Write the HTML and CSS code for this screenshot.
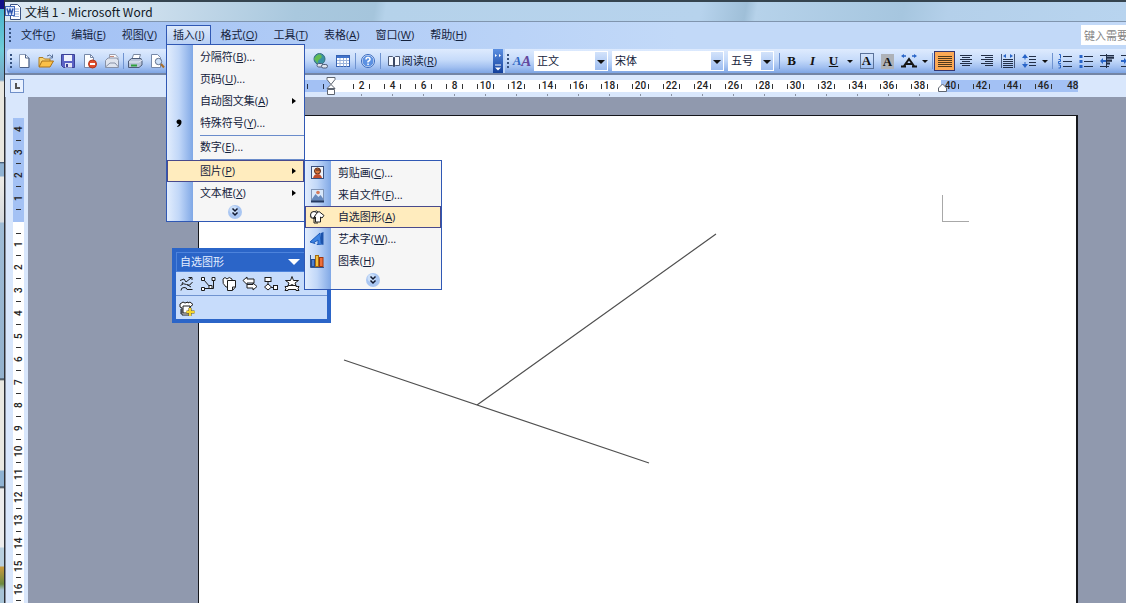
FILE: index.html
```html
<!DOCTYPE html>
<html lang="zh-CN">
<head>
<meta charset="utf-8">
<title>文档 1 - Microsoft Word</title>
<link rel="stylesheet" href="styles.css">
</head>
<body>
<div class="behind"></div>
<div class="app">
  <header class="titlebar">
    <svg class="icon" viewBox="0 0 16 16"><path d="M5.500 .5h7l3 3v12h-10z" fill="#fff" stroke="#3c5484"/><path d="M8 5h6M8 7.500h6M8 10h6M8 12.500h6" stroke="#9db4dc"/><rect x=".5" y="2.500" width="9" height="9" fill="#dbe6fa" stroke="#3f66b8"/><path d="M2 4.500l1.500 5L5 5.500l1.500 4L8 4.500" fill="none" stroke="#2d54ab" stroke-width="1.500"/></svg>
    <h1>文档 1 - Microsoft Word</h1>
  </header>

  <nav class="menubar">
    <span class="grip"></span>
    <ul class="menus">
      <li><button>文件(<u>F</u>)</button></li>
      <li><button>编辑(<u>E</u>)</button></li>
      <li><button>视图(<u>V</u>)</button></li>
      <li class="open"><button>插入(<u>I</u>)</button>
        <div class="menu menu-insert">
          <button class="row"><span class="rail"></span><span class="label">分隔符(<u>B</u>)...</span></button>
          <button class="row"><span class="rail"></span><span class="label">页码(<u>U</u>)...</span></button>
          <button class="row more"><span class="rail"></span><span class="label">自动图文集(<u>A</u>)</span></button>
          <button class="row"><span class="rail"><svg class="icon" viewBox="0 0 16 16"><path d="M5.500 7a2.500 2.500 0 1 1 5 0q0 3.500-4 5l-.4-.8q1.600-.8 1.900-1.900Q5.500 9 5.500 7z"/></svg></span><span class="label">特殊符号(<u>Y</u>)...</span></button>
          <hr>
          <button class="row"><span class="rail"></span><span class="label">数字(<u>E</u>)...</span></button>
          <hr>
          <div class="parent">
            <button class="row more hot"><span class="rail"></span><span class="label">图片(<u>P</u>)</span></button>
            <div class="menu submenu">
              <button class="row"><span class="rail"><svg class="icon" viewBox="0 0 16 16"><rect x="2.500" y="1.500" width="12" height="12" fill="#eef2f8" stroke="#38507f"/><circle cx="8.500" cy="6" r="3" fill="#d9763c" stroke="#5a2c18"/><path d="M4 13q1-4 4.500-4t4.500 4z" fill="#c04c2b"/><path d="M7 5h4" stroke="#402020"/></svg></span><span class="label">剪贴画(<u>C</u>)...</span></button>
              <button class="row"><span class="rail"><svg class="icon" viewBox="0 0 16 16"><rect x="2.500" y="2.500" width="12" height="11" fill="#d9e8fb" stroke="#8094b5"/><path d="M3 12l3.500-5 3 3 2-2 3 4v1.500H3z" fill="#6789bd"/><path d="M2 14.500h13" stroke="#243a63" stroke-width="2"/><circle cx="9" cy="5.500" r="1.800" fill="#d47a5c"/></svg></span><span class="label">来自文件(<u>F</u>)...</span></button>
              <button class="row hot"><span class="rail"><svg class="icon" viewBox="0 0 16 16"><path d="M3 9.500Q.5 8 2 5.500 2 2.500 5 3q3-2.500 4.500.5" fill="#fff" stroke="#222"/><circle cx="5" cy="6" r="3.500" fill="#fff" stroke="#222"/><path d="M7.500 4.500l2.500-2 5 4-2 2.500-1.500-1V13h-5V8l-2 1z" fill="#fff" stroke="#222"/><path d="M5 9v5h4" fill="none" stroke="#222"/></svg></span><span class="label">自选图形(<u>A</u>)</span></button>
              <button class="row"><span class="rail"><svg class="icon" viewBox="0 0 16 16"><path d="M1 11L11 2l1 10 2 1-6 .5 1-1V9L5 11.500l1 1z" fill="#3d83e2" stroke="#1f5bb8"/><path d="M12 2l2.500-1v13L12 12z" fill="#1c52aa"/></svg></span><span class="label">艺术字(<u>W</u>)...</span></button>
              <button class="row"><span class="rail"><svg class="icon" viewBox="0 0 16 16"><path d="M1.500 2v12.500H15" fill="none" stroke="#34568e"/><rect x="2.500" y="6.500" width="3" height="7" fill="#4e80cf" stroke="#244c93"/><rect x="6.500" y="2.500" width="3" height="11" fill="#f4c13e" stroke="#a36a11"/><rect x="10.500" y="4.500" width="3.500" height="9" fill="#ee703a" stroke="#a0350f"/></svg></span><span class="label">图表(<u>H</u>)</span></button>
              <button class="expand" aria-label="展开"><span class="rail"></span><svg class="orb" viewBox="0 0 14 14"><circle cx="7" cy="7" r="7" fill="#a9c6f2"/><circle cx="5.500" cy="5" r="4" fill="#cbdff9"/><path d="M4.500 3.500L7 6l2.500-2.500M4.500 7.500L7 10l2.500-2.500" fill="none" stroke="#101830" stroke-width="1.500"/></svg></button>
            </div>
          </div>
          <button class="row more"><span class="rail"></span><span class="label">文本框(<u>X</u>)</span></button>
          <button class="expand" aria-label="展开"><span class="rail"></span><svg class="orb" viewBox="0 0 14 14"><circle cx="7" cy="7" r="7" fill="#a9c6f2"/><circle cx="5.500" cy="5" r="4" fill="#cbdff9"/><path d="M4.500 3.500L7 6l2.500-2.500M4.500 7.500L7 10l2.500-2.500" fill="none" stroke="#101830" stroke-width="1.500"/></svg></button>
        </div>
      </li>
      <li><button>格式(<u>O</u>)</button></li>
      <li><button>工具(<u>T</u>)</button></li>
      <li><button>表格(<u>A</u>)</button></li>
      <li><button>窗口(<u>W</u>)</button></li>
      <li><button>帮助(<u>H</u>)</button></li>
    </ul>
    <input class="ask" type="text" placeholder="键入需要帮助的问题" aria-label="键入需要帮助的问题">
  </nav>

  <div class="toolbars">
    <div class="toolbar standard">
      <span class="grip"></span>
      <button class="tool" aria-label="新建"><svg class="icon" viewBox="0 0 16 16"><path d="M3.500 1.500h6l3.500 3.500v9.500H3.500z" fill="#fff" stroke="#8b9cb8"/><path d="M9.500 1.500V5H13v9.500H4" fill="none" stroke="#4d6288"/></svg></button>
      <button class="tool" aria-label="打开"><svg class="icon" viewBox="0 0 16 16"><path d="M1 13.500V4.500h4l1.500 1.500H12v3" fill="#f7d375" stroke="#b07d20"/><path d="M1 14l3-6h11.500L12 14z" fill="#fbc048" stroke="#a8711a"/><path d="M9 3q3-2.500 5 1m.5-2.500V5h-3" fill="none" stroke="#5a7198"/></svg></button>
      <button class="tool" aria-label="保存"><svg class="icon" viewBox="0 0 16 16"><path d="M1.500 1.500h13v13h-11l-2-2z" fill="#5b63c5" stroke="#3c4196"/><rect x="4" y="2" width="8" height="6" fill="#eef1fb"/><rect x="5" y="10" width="7" height="4.500" fill="#e4e6f4"/><rect x="6" y="11" width="2" height="3" fill="#3c4196"/></svg></button>
      <button class="tool" aria-label="权限"><svg class="icon" viewBox="0 0 16 16"><path d="M2.500 1.500h6l3 3v10h-9z" fill="#fff" stroke="#7688a8"/><path d="M8.500 1.500v3h3" fill="none" stroke="#7688a8"/><circle cx="10.500" cy="11" r="4" fill="#e04e2d" stroke="#b2361b"/><path d="M8 11h5" stroke="#fff" stroke-width="2"/></svg></button>
      <button class="tool" aria-label="电子邮件"><svg class="icon" viewBox="0 0 16 16"><path d="M5.500 1.500h6l2.500 3v7h-8.500z" fill="#f8f9fc" stroke="#98a0b2"/><path d="M1.500 7.500L4 5h9l1.500 2.500v7h-13z" fill="#dfe4ee" stroke="#8892a8"/><path d="M1.500 14L6 10h5l3.500 4" fill="none" stroke="#8892a8"/><path d="M6 3.500h4" stroke="#c48a7a"/></svg></button>
      <span class="rule"></span>
      <button class="tool" aria-label="打印"><svg class="icon" viewBox="0 0 16 16"><path d="M5 6l1.500-4.500h7L12 6" fill="#fff" stroke="#7a88a0"/><path d="M1.500 8l3-2.500h9.500L15 8v4l-3 2.500H1.500z" fill="#b9c4d8" stroke="#4c5c78"/><path d="M2 9h10l3-2" fill="none" stroke="#e9eef8"/><path d="M4 12.500h6" stroke="#2fa03c" stroke-width="2"/></svg></button>
      <button class="tool" aria-label="打印预览"><svg class="icon" viewBox="0 0 16 16"><path d="M2.500 1.500h6l3 3v10h-9z" fill="#fff" stroke="#7688a8"/><circle cx="9.500" cy="8.500" r="3.200" fill="#cfe2fa" stroke="#62728e"/><path d="M12 11l3 3.500" stroke="#a86e2a" stroke-width="2"/></svg></button>
      <span class="push"></span>
      <button class="tool" aria-label="超链接"><svg class="icon" viewBox="0 0 16 16"><circle cx="6.500" cy="6" r="5.500" fill="#3b91a6" stroke="#39707f"/><path d="M3 3q3-3 5-1t-1 4-2 4-4-4z" fill="#62bd52"/><rect x="4" y="10.500" width="6" height="3.500" rx="1.700" fill="#dfe5f0" stroke="#4f5d78"/><rect x="8.500" y="11.500" width="6" height="3.500" rx="1.700" fill="#dfe5f0" stroke="#4f5d78"/></svg></button>
      <button class="tool" aria-label="插入表格"><svg class="icon" viewBox="0 0 16 16"><rect x="1.500" y="2.500" width="13" height="11" fill="#fff" stroke="#3763b3"/><path d="M2 4h12" stroke="#3f73cc" stroke-width="2"/><path d="M2 7.500h12M2 10.500h12M5 5v8.500M8.500 5v8.500M11.500 5v8.500" stroke="#9db5dc"/></svg></button>
      <span class="rule"></span>
      <button class="tool" aria-label="帮助"><svg class="icon" viewBox="0 0 16 16"><circle cx="8" cy="8" r="6" fill="#5c91e2" stroke="#e9f1ff"/><circle cx="8" cy="8" r="6.500" fill="none" stroke="#3869bd"/><path d="M6 6.500Q6 4.500 8 4.500t2 2Q10 7.500 8 8.500v1" fill="none" stroke="#fff" stroke-width="1.500"/><path d="M7.300 10.500h1.500V12H7.300z" fill="#fff"/></svg></button>
      <span class="rule"></span>
      <button class="read"><svg class="icon" viewBox="0 0 16 16"><path d="M2.500 3.500h4L8 5l1.500-1.500h4v9h-4L8 13.500 6.500 12.500h-4z" fill="#f6f9ff" stroke="#4c5a76"/><path d="M8 5v8.500" stroke="#3a4763" stroke-width="2"/></svg>阅读(<u>R</u>)</button>
      <button class="cap" aria-label="工具栏选项"><svg viewBox="0 0 10 24"><path d="M2 5l2 1.500L2 8zM6 5l2 1.500L6 8z" fill="#fff"/><path d="M2 16h6" stroke="#fff"/><path d="M2 18.500h6L5 21.500z" fill="#fff"/></svg></button>
    </div>

    <div class="toolbar format">
      <span class="grip"></span>
      <button class="tool styles" aria-label="格式窗格"><i>A</i><i>A</i></button>
      <label class="combo combo-style"><select aria-label="样式"><option>正文</option></select></label>
      <label class="combo combo-font"><select aria-label="字体"><option>宋体</option></select></label>
      <label class="combo combo-size"><select aria-label="字号"><option>五号</option></select></label>
      <span class="rule"></span>
      <button class="tool letter"><b>B</b></button>
      <button class="tool letter"><i>I</i></button>
      <button class="tool letter"><u>U</u></button>
      <button class="drop" aria-label="下划线样式"></button>
      <button class="tool letter boxed"><span>A</span></button>
      <button class="tool letter shaded"><span>A</span></button>
      <button class="tool" aria-label="字符缩放"><svg class="icon wide" viewBox="0 0 18 16"><path d="M4 13l5-7 5 7M6 11h6M1 13.500h5M12 13.500h5" fill="none" stroke="#151515" stroke-width="2"/><path d="M4 1L1 3l3 2V3.700h2V2.300H4zM14 1l3 2-3 2V3.700h-2V2.300h2z" fill="#2864c8"/></svg></button>
      <button class="drop" aria-label="缩放选项"></button>
      <span class="rule"></span>
      <button class="tool active" aria-label="两端对齐"><svg class="icon" viewBox="0 0 16 16"><path d="M1 3.500h14M1 5.500h14M1 7.500h14M1 9.500h14M1 11.500h14M1 13.500h14" stroke="#503a1c"/></svg></button>
      <button class="tool" aria-label="居中"><svg class="icon" viewBox="0 0 16 16"><path d="M2 2.500h12M4 4.500h8M2 6.500h12M4 8.500h8M2 10.500h12M4 12.500h8" stroke="#222f47"/></svg></button>
      <button class="tool" aria-label="右对齐"><svg class="icon" viewBox="0 0 16 16"><path d="M2 2.500h12M6 4.500h8M2 6.500h12M6 8.500h8M2 10.500h12M6 12.500h8" stroke="#222f47"/></svg></button>
      <button class="tool" aria-label="分散对齐"><svg class="icon" viewBox="0 0 16 16"><path d="M1.500 1v14M14.500 1v14" stroke="#45577a"/><path d="M3 6.500h10M3 8.500h10M3 10.500h10M3 12.500h10M3 14.500h10" stroke="#222f47"/><path d="M6 1L3 3l3 2zM10 1l3 2-3 2z" fill="#2864c8"/></svg></button>
      <button class="tool" aria-label="行距"><svg class="icon" viewBox="0 0 16 16"><path d="M8 3.500h7M8 6.500h7M8 9.500h7M8 12.500h7" stroke="#222f47"/><path d="M4 1l3 4H1zM4 15l3-4H1zM3.500 5h1v1.500h-1zM3.500 9h1v2h-1z" fill="#2864c8"/></svg></button>
      <button class="drop" aria-label="行距选项"></button>
      <span class="rule"></span>
      <button class="tool" aria-label="编号"><svg class="icon" viewBox="0 0 16 16"><path d="M6 3.500h9M6 8.500h9M6 13.500h9" stroke="#222f47"/><path d="M2 1.500h1.500v4M1.500 6.500h2v2h-2v2h2.500M1.500 12h2v3h-2" fill="none" stroke="#2864c8"/></svg></button>
      <button class="tool" aria-label="项目符号"><svg class="icon" viewBox="0 0 16 16"><path d="M6 3.500h9M6 8.500h9M6 13.500h9" stroke="#222f47"/><path d="M1.500 2h3v3h-3zM1.500 7h3v3h-3zM1.500 12h3v3h-3z" fill="#2864c8"/></svg></button>
      <button class="tool" aria-label="减少缩进量"><svg class="icon" viewBox="0 0 16 16"><path d="M1 2.500h14M8 5h7M8 8h5M1 13.500h9" stroke="#222f47"/><path d="M8 4.500h7M8 7.500h5M8 10.500h3" stroke="#222f47" stroke-width="2"/><path d="M1 8l3-3v2h3v2H4v2z" fill="#2864c8"/><path d="M7.500 1v14" stroke="#222f47"/></svg></button>
      <button class="tool" aria-label="增加缩进量"><svg class="icon" viewBox="0 0 16 16"><path d="M1 2.500h14M8 5.500h7M8 8.500h5M1 13.500h9" stroke="#222f47"/><path d="M7 8L4 5v2H1v2h3v2z" fill="#2864c8"/></svg></button>
    </div>
  </div>

  <div class="ruler-row">
    <button class="tab-stop" aria-label="制表符"></button>
    <div class="hruler">
      <svg class="indent" viewBox="0 0 10 18"><path d="M1 .5h8v2L5 7.500l4 4H1l4-4-4-5zM1.500 12.500h7v5h-7z" fill="#fff" stroke="#5e6570"/></svg>
      <ol class="scale text-scale">
        <li>2</li><li>4</li><li>6</li><li>8</li><li>10</li><li>12</li><li>14</li><li>16</li><li>18</li><li>20</li><li>22</li><li>24</li><li>26</li><li>28</li><li>30</li><li>32</li><li>34</li><li>36</li><li>38</li>
      </ol>
      <ol class="scale margin-scale">
        <li>40</li><li>42</li><li>44</li><li>46</li><li>48</li>
      </ol>
      <svg class="indent-right" viewBox="0 0 9 9"><path d="M.5 8.500V5l4-4 4 4v3.500z" fill="#fff" stroke="#5e6570"/></svg>
    </div>
  </div>

  <main class="workspace">
    <div class="vruler">
      <ol class="above"><li>4</li><li>3</li><li>2</li><li>1</li></ol>
      <ol class="below"><li>1</li><li>2</li><li>3</li><li>4</li><li>5</li><li>6</li><li>7</li><li>8</li><li>9</li><li>10</li><li>11</li><li>12</li><li>13</li><li>14</li><li>15</li><li>16</li></ol>
    </div>
    <div class="canvas">
      <article class="page">
        <svg class="drawing" width="600" height="400" viewBox="0 0 600 400"><path d="M145 244L450 347M278 289L517 118" fill="none" stroke="#505050" stroke-width="1.200"/></svg>
        <span class="corner"></span>
      </article>
      <section class="palette">
        <h2>自选图形</h2>
        <div class="tools">
          <button aria-label="线条"><svg class="icon" viewBox="0 0 16 16"><path d="M1 4.500l4-1.500 2 3 5-4M9.500 1.500h3.500V4M1.500 9.500q3-3 6-1t6-2.500M2 14.500q0-3 3-3t3 2h5.500" fill="none" stroke="#1d1d1d"/><path d="M8 8.500l4 2.500M4 6l-1 2" fill="none" stroke="#1d1d1d"/></svg></button>
          <button aria-label="连接符"><svg class="icon" viewBox="0 0 16 16"><path d="M4 4l6 7M13.500 4v8.500H4" fill="none" stroke="#1d1d1d"/><path d="M1.500 1.500h3v3h-3zM12 1.500h3v3h-3zM1.500 11.500h3v3h-3zM9 9.500h3v3H9z" fill="#fff" stroke="#1d1d1d"/></svg></button>
          <button aria-label="基本形状"><svg class="icon" viewBox="0 0 16 16"><path d="M2 3q2-3 4 0 2-3 5 0v8H5Q1 8 2 3z" fill="#fff" stroke="#1d1d1d"/><path d="M6.500 4.500h8V11l-3 3.500h-5z" fill="#fff" stroke="#1d1d1d"/><path d="M11.500 14V11h3" fill="none" stroke="#1d1d1d"/></svg></button>
          <button aria-label="箭头总汇"><svg class="icon" viewBox="0 0 16 16"><path d="M1 4.500L5 1v2h7v4H5v1.500zM15 10.500L11 14v-2H5V8.500h6V7z" fill="#fff" stroke="#1d1d1d"/></svg></button>
          <button aria-label="流程图"><svg class="icon" viewBox="0 0 16 16"><rect x="2" y="1.500" width="6" height="4" fill="#fff" stroke="#1d1d1d"/><path d="M5 5.500v3M8 11.500h3" stroke="#1d1d1d"/><path d="M5 8l3.500 3L5 14l-3.500-3z" fill="#fff" stroke="#1d1d1d"/><rect x="10.500" y="9.500" width="4" height="4" fill="#fff" stroke="#1d1d1d"/></svg></button>
          <button aria-label="星与旗帜"><svg class="icon" viewBox="0 0 16 16"><path d="M8 .5l1.500 4h5L11 7l1.500 4L8 8.500 3.500 11 5 7 1.500 4.500h5z" fill="#fff" stroke="#1d1d1d"/><path d="M1 10.500h3v-1h8v1h3l-1 2 1 2h-3v-1H4v1H1l1-2z" fill="#fff" stroke="#1d1d1d"/></svg></button>
        </div>
        <div class="tools">
          <button aria-label="其他自选图形"><svg class="icon" viewBox="0 0 16 16"><path d="M1 3l3-2 2 1 3-1v1l2-1 3 2.500L11 6v8H3V7L1 6z" fill="#fff" stroke="#1d1d1d"/><path d="M4 5h7v7H4zM2 8v5" fill="none" stroke="#1d1d1d"/><path d="M11 7v8M7.500 11h8" stroke="#6b5910" stroke-width="3"/><path d="M11 7v8M7.500 11h8" stroke="#f6d52e" stroke-width="2"/></svg></button>
        </div>
      </section>
    </div>
  </main>
</div>
</body>
</html>
```
FILE: styles.css
```css
* { box-sizing: border-box; }

body {
  margin: 0;
  height: 100vh;
  overflow: hidden;
  display: grid;
  grid-template-columns: 5px minmax(0, 1fr);
  font: 11px/16px "Open Sans", "Noto Sans CJK SC", sans-serif;
  color: #14223c;
  background: #9099ae;
}

ul, ol { margin: 0; padding: 0; list-style: none; }

button, select, input {
  font: inherit;
  color: inherit;
  margin: 0;
  padding: 0;
  border: 0;
  background: none;
  border-radius: 0;
}

u { text-underline-offset: 1px; }

.icon { width: 16px; height: 16px; flex: none; display: block; }
.icon.wide { width: 18px; }

/* edge of the window that lies behind this one */
.behind {
  border-right: 1px solid #2c2f36;
  background: linear-gradient(#101088 9px, #49b4cd 9px, #6fcbd8 50px, #7ba4c6 80px, #e9e7df 82px, #e9e7df 162px, #34465c 162px, #8fb2d2 164px, #8fb2d2 176px, #ecebe6 177px, #d6dade 222px, #9fbcd6 223px, #93b1cd 378px, #26313d 379px, #e9e8e1 381px, #e9e8e1 470px, #8fb2d2 471px, #8fb2d2 486px, #26313d 487px, #ececec 489px, #ececec 547px, #b8cfdf 548px, #b8cfdf 566px, #c99a3e 567px, #6b8a3f 584px, #a7c3d6 590px);
}

.app {
  display: flex;
  flex-direction: column;
  min-width: 0;
  height: 100vh;
  overflow: hidden;
}

.titlebar {
  flex: none;
  display: flex;
  align-items: center;
  gap: 4px;
  height: 22px;
  border-top: 2px solid #35444f;
  border-bottom: 1px solid #8095ae;
  background: linear-gradient(100deg, #dbe8f2 0, #cfe0ee 12%, #a9c8de 26%, #a5c5dc 33%, #b5d2ea 34%, #b7d3ed 62%, #9fbfd8 66%, #b6d2ea 67%, #a6c6df 80%, #b4d0ea 84%, #b8d4ef 100%);
}

.titlebar h1 {
  margin: 0;
  font: 12px/18px "Noto Sans CJK SC", sans-serif;
  color: #10181f;
}

.menubar {
  flex: none;
  display: flex;
  align-items: center;
  height: 26px;
  padding-left: 4px;
  background: linear-gradient(90deg, #a1c0f4, #c2d9f8 60%);
}

.grip {
  flex: none;
  width: 3px;
  height: 14px;
  background: repeating-linear-gradient(#35517f 0 2px, transparent 2px 4px);
  background-size: 2px 100%;
  background-repeat: no-repeat;
}

.menus { display: flex; gap: 2px; margin-left: 2px; }
.menus > li { position: relative; }

.menus > li > button {
  display: block;
  height: 21px;
  padding: 0 6px;
  border: 1px solid transparent;
}

.menus > .open > button {
  border-color: #3058b4;
  border-bottom-color: transparent;
  background: linear-gradient(#dde9fb, #b7cff4);
}

.ask {
  width: 45px;
  height: 20px;
  margin-left: auto;
  padding-left: 3px;
  background: #fff;
}
.ask::placeholder { color: #858585; opacity: 1; }

.menu {
  position: absolute;
  z-index: 5;
  padding: 1px 0;
  border: 1px solid #3058b4;
  background: linear-gradient(90deg, #e2edfd, #c1d7f8 12px, #80a8e6 26px, #f6f6f6 26px);
}

.menu-insert { top: 19px; left: 0; width: 139px; }
.parent { position: relative; }
.submenu { top: 0; left: 100%; width: 138px; }

.row {
  display: flex;
  align-items: center;
  width: 100%;
  height: 22px;
  padding: 0 5px 0 1px;
  text-align: left;
}

.row.hot {
  background: #ffecbe;
  box-shadow: inset 0 0 0 1px #494a8c;
}

.rail {
  flex: none;
  display: flex;
  justify-content: center;
  width: 22px;
  margin-right: 10px;
}

.label { flex: 1; white-space: nowrap; }

.row.more::after {
  content: "";
  border: 3px solid transparent;
  border-left: 4px solid #000;
}

.menu hr {
  height: 1px;
  margin: 1px 0 0 33px;
  border: 0;
  background: #6a8ccb;
}

.expand {
  display: flex;
  align-items: center;
  justify-content: center;
  width: 100%;
  height: 16px;
}
.expand .rail { display: none; }
.orb { width: 14px; height: 14px; }

.toolbars {
  flex: none;
  display: flex;
  gap: 2px;
  height: 27px;
  padding: 1px 0 0 2px;
  border-bottom: 2px solid #7385a5;
  background: linear-gradient(90deg, #a9c5f4, #c2d9f8 60%);
}

.toolbar {
  display: flex;
  align-items: center;
  height: 24px;
  background: linear-gradient(#deebfe, #c6dbfa 45%, #a3c1f1 75%, #7ea5e4);
}

.standard {
  flex: none;
  width: 496px;
  padding-left: 3px;
  border-radius: 4px 0 0 4px;
}

.format {
  flex: 1;
  min-width: 0;
  padding-left: 2px;
  overflow: hidden;
}

.tool {
  flex: none;
  display: flex;
  align-items: center;
  justify-content: center;
  width: 22px;
  height: 20px;
}
.format .tool { width: 21px; }

.format .active {
  border: 1px solid #34366f;
  background: #fca955;
}

.rule {
  flex: none;
  width: 1px;
  height: 16px;
  background: #6f93d0;
}
.format .rule { margin: 0 1px; }
.standard .push ~ .rule { margin: 0 1px; }
.push { flex: 1; }

.read {
  display: flex;
  align-items: center;
  padding-left: 4px;
  margin-right: 56px;
}

.cap {
  width: 10px;
  height: 24px;
  background: linear-gradient(#5c90e2, #123f9c);
}
.cap svg { display: block; width: 10px; height: 24px; }

.styles {
  font: italic bold 13px/16px "Liberation Serif", serif;
  color: #2e66c2;
}
.styles i + i { color: #64489d; font-size: 15px; }
.format .styles { width: 24px; }

.combo {
  flex: none;
  position: relative;
  height: 20px;
  margin-right: 4px;
  background: #fff;
}
.combo select {
  appearance: none;
  width: 100%;
  height: 20px;
  padding-left: 3px;
}
.combo::after {
  content: "";
  position: absolute;
  top: 1px;
  right: 1px;
  bottom: 1px;
  width: 12px;
  pointer-events: none;
  background: linear-gradient(#d3e3fb, #9dbdf0);
}
.combo::before {
  content: "";
  position: absolute;
  z-index: 1;
  top: 9px;
  right: 3px;
  border: 4px solid transparent;
  border-top-color: #111;
  border-bottom: 0;
  pointer-events: none;
}
.combo-style { width: 74px; }
.combo-font { width: 112px; }
.combo-size { width: 46px; }

.letter { font: bold 13px/16px "Liberation Serif", serif; color: #111; }
.boxed span { width: 14px; line-height: 14px; border: 1px solid #5b7299; }
.shaded span { width: 13px; line-height: 15px; background: #aeb2b8; }

.drop {
  flex: none;
  display: flex;
  justify-content: center;
  width: 12px;
}
.drop::after {
  content: "";
  border: 3px solid transparent;
  border-top-color: #111;
  border-bottom: 0;
}

.ruler-row {
  flex: none;
  display: flex;
  height: 22px;
  padding-left: 5px;
  background: #d9e7fc;
}

.tab-stop {
  flex: none;
  width: 14px;
  height: 14px;
  margin-top: 4px;
  border: 1px solid #6f8fc8;
  background: linear-gradient(#555, #555) 4px 3px / 2px 6px no-repeat, linear-gradient(#555, #555) 4px 7px / 5px 2px no-repeat, #eaf2ff;
}

.hruler {
  position: relative;
  display: flex;
  margin: 5px 0 0 174px;
  padding-left: 132px;
  height: 12px;
  background: repeating-linear-gradient(90deg, transparent 0 11px, #26324a 11px 12px, transparent 12px 16px) 98px 4px / 34px 5px no-repeat, #a3c1f4;
}

.scale {
  display: flex;
  font: 500 10px/12px Roboto, "Liberation Sans", sans-serif;
  color: #222;
}
.scale li {
  display: flex;
  align-items: center;
  justify-content: space-between;
  width: 31px;
  height: 12px;
  padding: 0 7px;
}
.scale li::before, .scale li::after {
  content: "";
  width: 1px;
  height: 5px;
  background: #333;
}

.text-scale { padding: 0 0 0 16px; background: #fff; }
.text-scale li {
  height: 16px;
  padding-bottom: 4px;
  background: linear-gradient(#8a93a3, #8a93a3) 15px 14px / 1px 2px no-repeat;
}
.margin-scale { background: linear-gradient(#fff, #fff) 0 0 / 6px 100% no-repeat; }
.margin-scale li:first-child::before { background: none; }
.margin-scale li:last-child {
  width: 19px;
  padding: 0 0 0 6px;
  justify-content: flex-start;
  gap: 2px;
}
.margin-scale li:last-child::after { content: none; }

.indent {
  position: absolute;
  left: 128px;
  top: -3px;
  width: 10px;
  height: 18px;
}
.indent-right {
  position: absolute;
  right: 131px;
  top: 3px;
  width: 9px;
  height: 9px;
}

.workspace { flex: 1; min-height: 0; display: flex; }

.vruler {
  flex: none;
  display: flex;
  flex-direction: column;
  width: 23px;
  padding: 21px 4px 0 7px;
  border-left: 1px solid #8a909c;
  background: #d9e7fc;
}
.vruler ol {
  font: 500 10px/12px Roboto, "Liberation Sans", sans-serif;
  color: #222;
}
.vruler li {
  display: flex;
  align-items: center;
  justify-content: center;
  height: 23px;
  writing-mode: vertical-rl;
  transform: rotate(180deg);
  background: linear-gradient(#333, #333) center top / 5px 1px no-repeat;
}
.above { flex: none; height: 104px; background: #a3c1f4; }
.below {
  flex: 1;
  padding-top: 11px;
  background: linear-gradient(#333, #333) center 11px / 5px 1px no-repeat, #fff;
}

.canvas {
  position: relative;
  flex: 1;
  display: flex;
  min-width: 0;
  padding: 18px 48px 0 170px;
  background: #9099ae;
}

.page {
  position: relative;
  flex: 1;
  border: solid #15171c;
  border-width: 1px 2px 0 1px;
  background: #fff;
}
.drawing { position: absolute; top: 0; left: 0; }
.corner {
  position: absolute;
  top: 79px;
  right: 107px;
  width: 27px;
  height: 27px;
  border: solid #a8a8a8;
  border-width: 0 0 1px 1px;
}

.palette {
  position: absolute;
  top: 151px;
  left: 144px;
  width: 159px;
  padding: 4px;
  background: #2b65c8;
}
.palette h2 {
  display: flex;
  align-items: center;
  justify-content: space-between;
  height: 20px;
  margin: 0;
  padding: 0 26px 0 3px;
  font: inherit;
  color: #e4eeff;
  border: 1px solid #4d83dc;
}
.palette h2::after {
  content: "";
  border: 6px solid transparent;
  border-top-color: #fff;
  border-bottom: 0;
}
.palette .tools {
  display: flex;
  gap: 5px;
  padding: 2px 3px;
  height: 23px;
  background: #c7dcfb;
}
.palette .tools + .tools {
  height: 24px;
  padding-top: 4px;
  border-top: 1px solid #6f93d0;
}
```
